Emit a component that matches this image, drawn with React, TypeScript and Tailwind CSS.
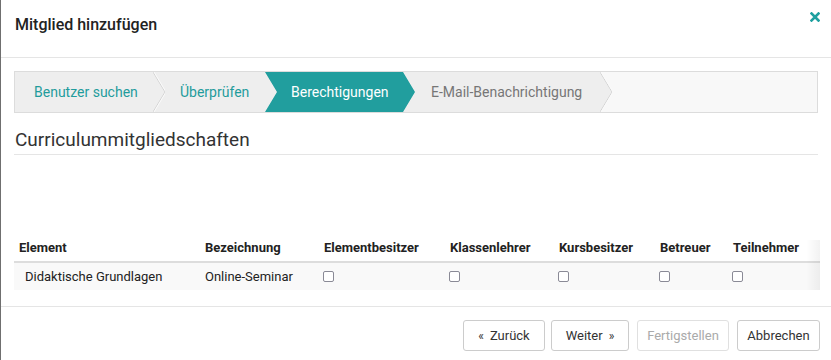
import React from "react";

const font = { fontFamily: "Roboto, 'Noto Sans', sans-serif" };

function Sep({ left, right }: { left: string; right: string }) {
  return (
    <svg width="12" height="40" viewBox="0 0 12 40" className="block shrink-0">
      <rect x="0" y="0" width="12" height="40" fill={right} />
      <polygon points="0,0 0,40 0,40 12,20" fill={left} />
      <polyline points="0,0 12,20 0,40" fill="none" stroke="#d4d4d4" strokeWidth="1" />
      <polyline points="1,0 13,20 1,40" fill="none" stroke="#fafafa" strokeWidth="1" />
    </svg>
  );
}

export default function App() {
  const cols = ["Element", "Bezeichnung", "Elementbesitzer", "Klassenlehrer", "Kursbesitzer", "Betreuer", "Teilnehmer"];
  return (
    <div className="w-[831px] h-[360px] bg-white border-l border-[#6f6f6f] overflow-hidden text-[#333]" style={font}>
      {/* header */}
      <div className="h-[58px] border-b border-[#e5e5e5] flex items-start justify-between pl-[14px] pr-[11px]">
        <div className="pt-[14px] text-[16px] font-medium text-[#222] leading-[22px]">Mitglied hinzufügen</div>
        <svg width="10" height="10" viewBox="0 0 10 10" className="mt-[12px]">
          <path d="M1.5 1.5 L8.5 8.5 M8.5 1.5 L1.5 8.5" stroke="#1fa0a0" strokeWidth="2.6" strokeLinecap="square" />
        </svg>
      </div>

      {/* wizard */}
      <div className="mx-[13px] mt-[13px] h-[42px] border border-[#dcdcdc] bg-[#eeeeee] flex text-[14px]">
        <div className="w-[138px] pl-[19px] flex items-center text-[#1f9c9c]">Benutzer suchen</div>
        <Sep left="#eeeeee" right="#eeeeee" />
        <div className="w-[100px] pl-[15px] flex items-center text-[#1f9c9c]">Überprüfen</div>
        <div
          className="w-[150px] pl-[26px] flex items-center bg-[#219e9e] text-white"
          style={{ clipPath: "polygon(0 0, calc(100% - 12px) 0, 100% 50%, calc(100% - 12px) 100%, 0 100%, 12px 50%)" }}
        >
          Berechtigungen
        </div>
        <div className="w-[185px] pl-[16px] flex items-center text-[#767676]">E-Mail-Benachrichtigung</div>
        <Sep left="#eeeeee" right="#f8f8f8" />
        <div className="flex-1 bg-[#f8f8f8]" />
      </div>

      {/* section heading */}
      <div className="mx-[13px] mt-[16px] pb-[3px] border-b border-[#e5e5e5] pl-[1px] text-[19px] leading-[22px] text-[#333]">
        Curriculummitgliedschaften
      </div>

      {/* table */}
      <div className="relative mx-[13px] mt-[85px] w-[806px]">
        <div className="grid grid-cols-[186px_119px_126px_109px_101px_73px_92px] border-b-2 border-[#dddddd] text-[13px] font-bold text-[#222] h-[23px] items-start">
          {cols.map((c) => (
            <div key={c} className="pl-[5px] leading-[16px]">{c}</div>
          ))}
        </div>
        <div className="grid grid-cols-[186px_119px_126px_109px_101px_73px_92px] bg-[#f9f9f9] h-[27px] items-center text-[13px] text-[#222]">
          <div className="pl-[11px]">Didaktische Grundlagen</div>
          <div className="pl-[5px]">Online-Seminar</div>
          {[0, 1, 2, 3, 4].map((i) => (
            <div key={i} className="pl-[4px] flex items-center">
              <span className="block w-[11px] h-[11px] border border-[#8a8a96] rounded-[2px] bg-white" />
            </div>
          ))}
        </div>
        <div className="absolute right-0 top-0 bottom-0 w-[14px] bg-gradient-to-r from-transparent to-[rgba(0,0,0,0.05)]" />
      </div>

      {/* footer */}
      <div className="mt-[16px] border-t border-[#e5e5e5] pt-[13px] pr-[11px] flex justify-end text-[13px]">
        <button className="w-[82px] h-[31px] border border-[#cccccc] rounded-[3px] bg-white text-[#333] flex items-center justify-center gap-[6px]">
          <span className="text-[12px]">«</span>Zurück
        </button>
        <button className="ml-[6px] w-[78px] h-[31px] border border-[#cccccc] rounded-[3px] bg-white text-[#333] flex items-center justify-center gap-[6px]">
          Weiter<span className="text-[12px]">»</span>
        </button>
        <button className="ml-[8px] w-[92px] h-[31px] border border-[#e0e0e0] rounded-[3px] bg-white text-[#aaaaaa] flex items-center justify-center">
          Fertigstellen
        </button>
        <button className="ml-[8px] w-[83px] h-[31px] border border-[#cccccc] rounded-[3px] bg-white text-[#333] flex items-center justify-center">
          Abbrechen
        </button>
      </div>
    </div>
  );
}
